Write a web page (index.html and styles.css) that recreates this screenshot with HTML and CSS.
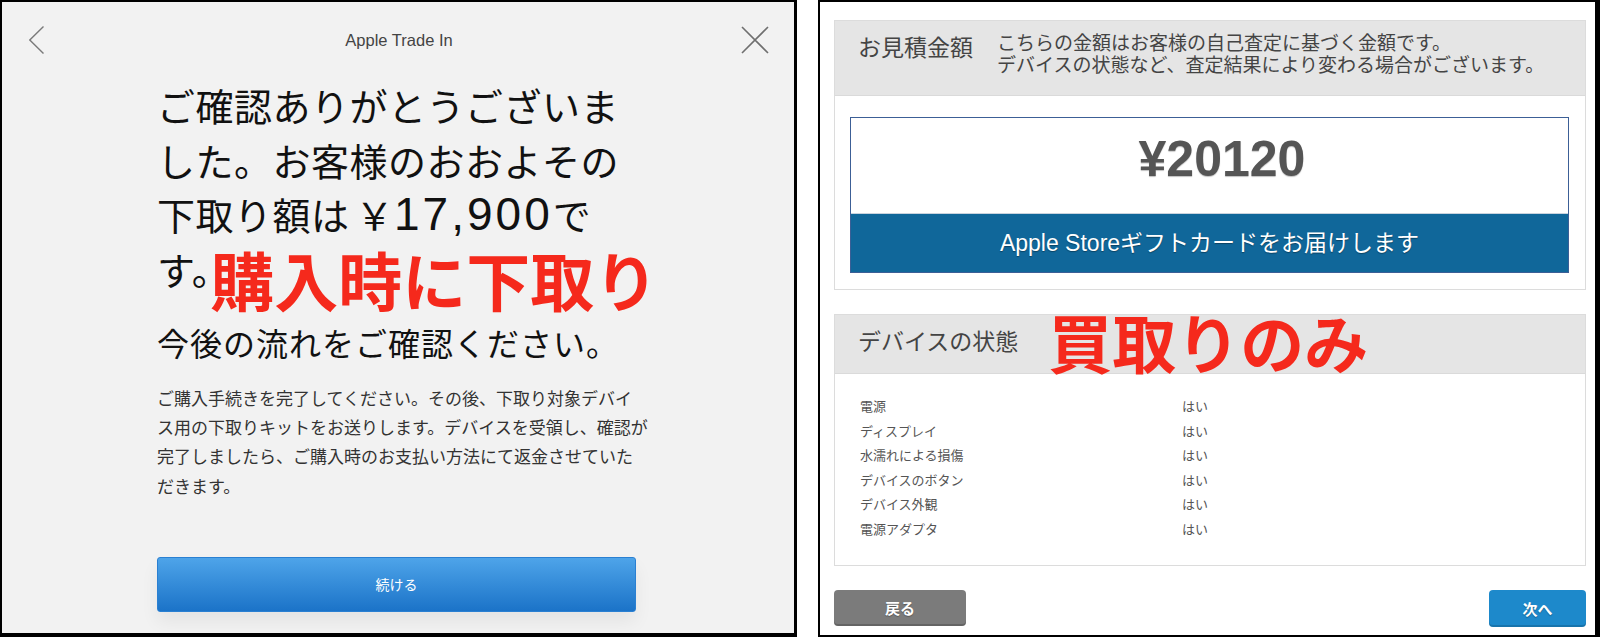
FILE: index.html
```html
<!DOCTYPE html>
<html lang="ja">
<head>
  <meta charset="UTF-8" />
  <meta name="viewport" content="width=device-width, initial-scale=1" />
  <title>Apple Trade In</title>
  <link rel="stylesheet" href="styles.css">
</head>
<body>
  <div class="screen">
    <section class="trade">
      <div class="topbar">
        <svg class="back" width="15" height="28" viewBox="0 0 15 28">
          <polyline points="14.5,0.5 0.8,14 14.5,27.5" fill="none" stroke="#7a7a7a" stroke-width="1.4" />
        </svg>
        <div class="title">Apple Trade In</div>
        <svg class="close" width="28" height="28" viewBox="0 0 28 28">
          <path d="M1 1L27 27M27 1L1 27" fill="none" stroke="#6f6f6f" stroke-width="1.6" />
        </svg>
      </div>

      <div class="content">
        <h1>ご確認ありがとうございま<br>した。お客様のおおよその<br>下取り額は<span class="yen">￥</span><span class="num">17,900</span>で<br>す。<span class="note note-trade">購入時に下取り</span></h1>
        <h2>今後の流れをご確認ください。</h2>
        <p class="lead">ご購入手続きを完了してください。その後、下取り対象デバイ<br>ス用の下取りキットをお送りします。デバイスを受領し、確認が<br>完了しましたら、ご購入時のお支払い方法にて返金させていた<br>だきます。</p>
        <button class="continue">続ける</button>
      </div>
    </section>

    <section class="quote">
      <div class="card">
        <div class="card-head">
          <div class="card-title">お見積金額</div>
          <div class="card-desc">こちらの金額はお客様の自己査定に基づく金額です。<br>デバイスの状態など、査定結果により変わる場合がございます。</div>
        </div>
        <div class="estimate">
          <div class="price-box">
            <div class="price">¥20120</div>
            <div class="gift">Apple Storeギフトカードをお届けします</div>
          </div>
        </div>
      </div>

      <div class="card card-status">
        <div class="card-head status-head">
          <div class="card-title">デバイスの状態</div>
          <span class="note note-buy">買取りのみ</span>
        </div>
        <div class="answers">
          <div class="row"><span>電源</span><span>はい</span></div>
          <div class="row"><span>ディスプレイ</span><span>はい</span></div>
          <div class="row"><span>水濡れによる損傷</span><span>はい</span></div>
          <div class="row"><span>デバイスのボタン</span><span>はい</span></div>
          <div class="row"><span>デバイス外観</span><span>はい</span></div>
          <div class="row"><span>電源アダプタ</span><span>はい</span></div>
        </div>
      </div>

      <div class="actions">
        <button class="btn-back">戻る</button>
        <button class="btn-next">次へ</button>
      </div>
    </section>
  </div>
</body>
</html>
```

FILE: styles.css
```css
body {
  margin: 0;
  background: #fff;
  font-family: "Noto Sans CJK JP", "Liberation Sans", sans-serif;
  color: #333;
}
.screen {
  display: flex;
  height: 637px;
  overflow: hidden;
}

/* left: Apple Trade In */
.trade {
  width: 797px;
  height: 637px;
  box-sizing: border-box;
  border: 2px solid #000;
  border-right-width: 3px;
  border-bottom-width: 4px;
  background: #f2f2f2;
}
.topbar {
  display: grid;
  grid-template-columns: 28px 1fr 28px;
  align-items: center;
  padding: 24px 25px 0 27px;
  height: 28px;
}
.back {
  display: block;
}
.close {
  display: block;
}
.title {
  text-align: center;
  font-family: "Liberation Sans", sans-serif;
  font-size: 16.5px;
  color: #444;
}
.content {
  margin-left: 155px;
  width: 479px;
}
h1 {
  margin: 24px 0 0;
  font-size: 38px;
  line-height: 54.5px;
  font-weight: normal;
  letter-spacing: 0.5px;
  color: #111;
  white-space: nowrap;
}
.yen {
  margin-left: 6px;
}
.num {
  font-family: "Liberation Sans", sans-serif;
  font-size: 46px;
  line-height: 1;
  letter-spacing: 3px;
}
.note {
  font-family: "Noto Sans CJK JP", sans-serif;
  font-weight: 700;
  color: #f5291c;
  letter-spacing: 0;
}
.note-trade {
  font-size: 64px;
  line-height: 0;
  vertical-align: -21px;
  margin-left: -20px;
}
h2 {
  margin: 24px 0 0;
  font-size: 32px;
  line-height: 44px;
  font-weight: normal;
  letter-spacing: 1px;
  color: #111;
  white-space: nowrap;
}
.lead {
  margin: 19px 0 0;
  font-size: 17px;
  line-height: 29.2px;
  color: #333;
  white-space: nowrap;
}
.continue {
  display: block;
  margin-top: 57px;
  width: 479px;
  height: 55px;
  border: 1px solid #2a80d2;
  border-radius: 3px;
  background: linear-gradient(#4ea4e9, #1b73c8);
  box-shadow: 0 10px 18px rgba(0,0,0,0.06);
  color: #fff;
  font-family: "Noto Sans CJK JP", sans-serif;
  font-size: 14px;
  cursor: pointer;
}

/* right: estimate */
.quote {
  flex: 1;
  height: 637px;
  margin-left: 21px;
  box-sizing: border-box;
  border: 2px solid #000;
  border-right-width: 5px;
  padding: 18px 9px 0 14px;
  background: #fff;
}
.card {
  border: 1px solid #dcdcdc;
}
.card-status {
  margin-top: 24px;
}
.card-head {
  display: flex;
  align-items: flex-start;
  height: 75px;
  box-sizing: border-box;
  padding: 10px 0 0 23px;
  background: #e5e5e5;
  border-bottom: 1px solid #dadada;
}
.card-title {
  font-size: 23px;
  line-height: 30px;
  color: #444;
  white-space: nowrap;
}
.card-desc {
  margin-left: 24px;
  font-size: 19px;
  line-height: 21.5px;
  color: #444;
  white-space: nowrap;
}
.estimate {
  padding: 21px 16px 16px 15px;
}
.price-box {
  border: 1px solid #3c5f96;
}
.price {
  padding: 0 0 12px 25px;
  line-height: 83px;
  text-align: center;
  font-family: "Liberation Sans", sans-serif;
  font-size: 50px;
  font-weight: bold;
  color: #555;
  text-shadow: 0 1px 1px rgba(0,0,0,0.25);
}
.gift {
  height: 58px;
  line-height: 58px;
  text-align: center;
  background: #10679a;
  border-top: 1px solid #c9d3de;
  font-family: "Liberation Sans", "Noto Sans CJK JP", sans-serif;
  font-size: 23px;
  color: #fff;
  text-shadow: 0 1px 1px rgba(0,0,0,0.35);
}
.status-head {
  height: 59px;
  align-items: center;
  padding: 0 0 8px 23px;
}
.note-buy {
  margin-left: 30px;
  font-size: 64px;
  line-height: 64px;
}
.answers {
  padding: 20px 0 23px 25px;
  font-size: 13px;
  line-height: 24.6px;
  color: #555;
}
.row {
  display: grid;
  grid-template-columns: 322px 1fr;
}
.actions {
  display: flex;
  justify-content: space-between;
  align-items: flex-start;
  margin-top: 24px;
}
.actions button {
  border: none;
  border-radius: 4px;
  color: #fff;
  font-family: "Noto Sans CJK JP", sans-serif;
  font-size: 15px;
  font-weight: bold;
  text-shadow: 0 1px 1px rgba(0,0,0,0.3);
  cursor: pointer;
}
.btn-back {
  width: 132px;
  height: 36px;
  background: #7b7b7b;
  box-shadow: inset 0 -2px 0 rgba(0,0,0,0.18);
}
.btn-next {
  width: 97px;
  height: 37px;
  background: #1d89cb;
  box-shadow: inset 0 -2px 0 rgba(0,0,0,0.15);
}
```
